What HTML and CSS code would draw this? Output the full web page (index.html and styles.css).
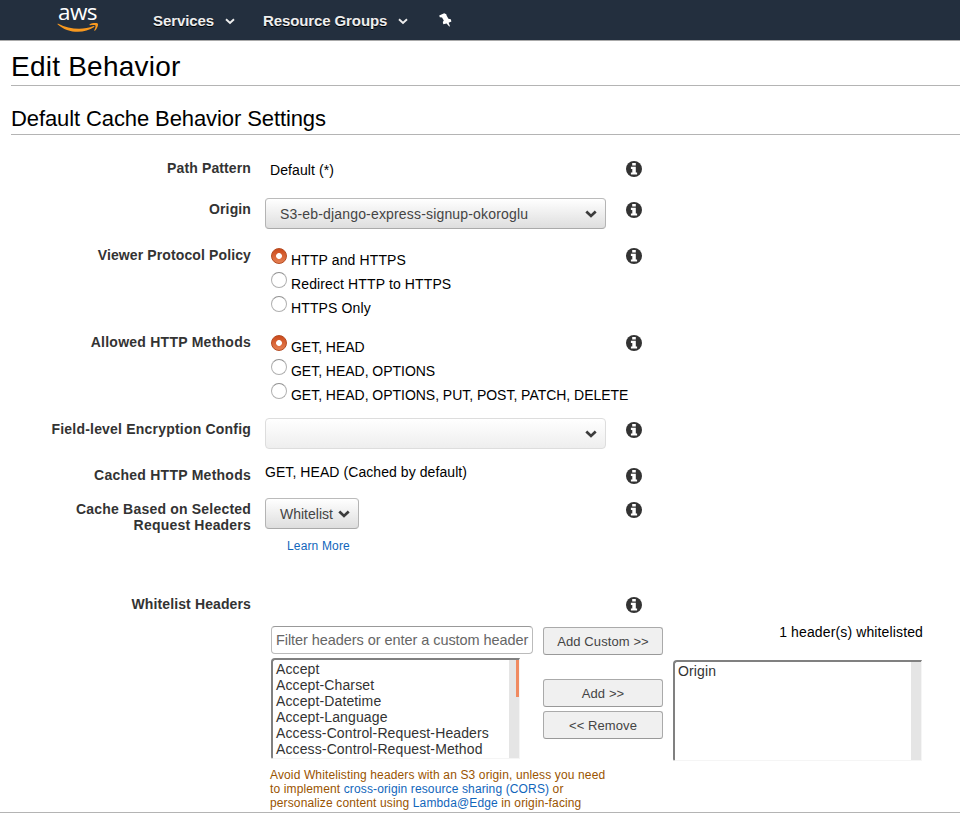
FILE: index.html
```html
<!DOCTYPE html>
<html lang="en">
<head>
<meta charset="utf-8">
<title>Edit Behavior</title>
<link rel="stylesheet" href="styles.css">
</head>
<body>
<svg class="defs" width="0" height="0" aria-hidden="true">
  <symbol id="info" viewBox="0 0 16 16">
    <circle cx="8" cy="8" r="8" fill="#333"/>
    <path fill="#fff" d="M6.200 2h3.600v2.600H6.200zM4.900 5.800h4.900v5.600h1.300v2.100H4.900v-2.100h1.400V7.900H4.900z"/>
  </symbol>
  <symbol id="chevron" viewBox="0 0 12 8">
    <path d="M1.300 1.400 6 5.900l4.700-4.500" fill="none" stroke="currentColor" stroke-width="2.700"/>
  </symbol>
  <symbol id="caret" viewBox="0 0 10 7">
    <path d="M1 1.300 5 5l4-3.700" fill="none" stroke="currentColor" stroke-width="1.900"/>
  </symbol>
</svg>
<header class="topbar">
  <div class="logo">
    <span class="logo-text">aws</span>
    <svg class="smile" width="42" height="10" viewBox="0 0 42 10" fill="#f7981f">
      <path d="M.5 1.200C.3.800.8.400 1.300.8 12 6.300 26 7.500 36.500 3c.8-.3 1.400.5.7 1.100C27 11 10.500 10.500.5 1.200z"/>
      <path d="M32.500 1.500c2-1.500 6.800-1.800 8.200-1 .9.800-.2 5.200-2.700 7.200-.5.300-.9.100-.7-.4.700-1.700 1.600-4 1.100-4.800-.6-.8-3.200-.5-5.300-.3-.7.100-1-.3-.6-.7z"/>
    </svg>
  </div>
  <nav class="nav">
    <a class="nav-item">Services<svg class="nav-caret"><use href="#caret"/></svg></a>
    <a class="nav-item">Resource Groups<svg class="nav-caret"><use href="#caret"/></svg></a>
    <svg class="pin" width="13" height="14" viewBox="0 0 13 14"><path fill="#fff" d="M5.200.3 7.300 1.200 7.600 2.500 9.400 5.700 11.800 6.200 12.400 8.400 9.600 9.800 11 13.300 10.200 13.500 7.600 10.500 4.300 11.200 3.800 9 4.800 7.400 3 4.500.8 4.200.2 2.600z"/></svg>
  </nav>
</header>
<main>
  <h1>Edit Behavior</h1>
  <h2>Default Cache Behavior Settings</h2>
  <div class="form">
    <div class="row path">
      <div class="label">Path Pattern</div>
      <div class="field">Default (*)</div>
      <svg class="info"><use href="#info"/></svg>
    </div>
    <div class="row origin">
      <div class="label">Origin</div>
      <div class="field"><div class="select">S3-eb-django-express-signup-okoroglu<svg><use href="#chevron"/></svg></div></div>
      <svg class="info"><use href="#info"/></svg>
    </div>
    <div class="row radios viewer">
      <div class="label">Viewer Protocol Policy</div>
      <div class="field">
        <div class="option"><i class="radio on"></i>HTTP and HTTPS</div>
        <div class="option"><i class="radio"></i>Redirect HTTP to HTTPS</div>
        <div class="option"><i class="radio"></i>HTTPS Only</div>
      </div>
      <svg class="info"><use href="#info"/></svg>
    </div>
    <div class="row radios methods">
      <div class="label">Allowed HTTP Methods</div>
      <div class="field">
        <div class="option"><i class="radio on"></i>GET, HEAD</div>
        <div class="option"><i class="radio"></i>GET, HEAD, OPTIONS</div>
        <div class="option"><i class="radio"></i>GET, HEAD, OPTIONS, PUT, POST, PATCH, DELETE</div>
      </div>
      <svg class="info"><use href="#info"/></svg>
    </div>
    <div class="row encryption">
      <div class="label">Field-level Encryption Config</div>
      <div class="field"><div class="select disabled"><svg><use href="#chevron"/></svg></div></div>
      <svg class="info"><use href="#info"/></svg>
    </div>
    <div class="row cached">
      <div class="label">Cached HTTP Methods</div>
      <div class="field">GET, HEAD (Cached by default)</div>
      <svg class="info"><use href="#info"/></svg>
    </div>
    <div class="row based">
      <div class="label">Cache Based on Selected<br>Request Headers</div>
      <div class="field"><div class="select small">Whitelist<svg><use href="#chevron"/></svg></div><a class="learn">Learn More</a></div>
      <svg class="info"><use href="#info"/></svg>
    </div>
    <div class="row whitelist">
      <div class="label">Whitelist Headers</div>
      <div class="field"></div>
      <svg class="info"><use href="#info"/></svg>
    </div>
  </div>
  <div class="picker">
    <div class="available">
      <div class="filter">Filter headers or enter a custom header</div>
      <div class="list">
        <div class="items">
          <div>Accept</div><div>Accept-Charset</div><div>Accept-Datetime</div><div>Accept-Language</div><div>Access-Control-Request-Headers</div><div>Access-Control-Request-Method</div>
        </div>
        <div class="track"><div class="thumb"></div></div>
      </div>
    </div>
    <div class="actions">
      <div class="button custom">Add Custom &gt;&gt;</div>
      <div class="button">Add &gt;&gt;</div>
      <div class="button">&lt;&lt; Remove</div>
    </div>
    <div class="chosen">
      <div class="count">1 header(s) whitelisted</div>
      <div class="list"><div class="items"><div>Origin</div></div><div class="track"></div></div>
    </div>
  </div>
  <p class="warning">Avoid Whitelisting headers with an S3 origin, unless you need<br>to implement <a>cross-origin resource sharing (CORS)</a> or<br>personalize content using <a>Lambda@Edge</a> in origin-facing</p>
</main>
</body>
</html>
```
FILE: styles.css
```css
* { box-sizing: border-box; }
body { margin: 0; background: #fff; color: #000; font: 14px/16px "Liberation Sans", Arial, sans-serif; width: 960px; height: 815px; overflow: hidden; }
.defs { display: block; }
svg { display: block; }
.topbar { height: 41px; background: #232f3e; border-bottom: 1px solid #aaa; display: flex; padding-left: 57px; }
.logo { width: 43px; height: 40px; display: flex; flex-direction: column; }
.logo-text { height: 23px; font: 500 22.500px/24px "Open Sans", sans-serif; color: #fff; padding-left: 1px; letter-spacing: -.6px; }
.nav { display: flex; padding: 1px 0 0 53px; height: 41px; align-items: center; }
.nav-item { display: flex; align-items: center; color: #eee; font-size: 15px; font-weight: bold; line-height: 18px; letter-spacing: -.1px; text-shadow: 0 1px 0 #000; margin-right: 28px; }
.nav-caret { width: 10px; height: 7px; margin: 1px 0 0 11px; }
.pin { margin: -2px 0 0 3px; }
h1 { margin: 0 0 0 11px; height: 45px; padding-top: 10px; font-size: 28px; line-height: 32px; letter-spacing: .23px; font-weight: normal; border-bottom: 1px solid #b4b4b4; }
h2 { margin: 0 0 0 11px; height: 49px; padding-top: 20px; font-size: 22px; line-height: 26px; letter-spacing: -.1px; font-weight: normal; border-bottom: 1px solid #b4b4b4; }
.form { padding-top: 22px; }
.row { display: grid; grid-template-columns: 251px 341px 16px; column-gap: 14px; }
.row .info { width: 16px; height: 16px; margin: 4px 0 0 6px; }
.label { text-align: right; font-weight: bold; color: #333; padding-top: 3px; white-space: nowrap; letter-spacing: .2px; }
.path .label, .origin .label, .viewer .label, .whitelist .label { letter-spacing: .12px; }
.methods .label, .cached .label { letter-spacing: .25px; }
.field { white-space: nowrap; letter-spacing: .1px; }
.path { height: 41px; }
.path .field { padding: 5px 0 0 5px; }
.origin, .encryption { height: 46px; }
.radios { height: 87px; }
.radios .field { padding: 4px 0 0 6px; }
.viewer .field { letter-spacing: .12px; }
.methods .field { letter-spacing: -.03px; }
.cached { height: 34px; }
.cached .field { letter-spacing: .07px; }
.based { height: 95px; }
.whitelist { height: 33px; }
.option { display: flex; height: 24px; line-height: 24px; gap: 4px; }
.radio { flex: none; width: 16px; height: 16px; border-radius: 50%; border: 1px solid #b0b0b0; border-top-color: #909090; background: #fff; }
.radio.on { border-color: #b54a20; background: radial-gradient(circle, #fff 0 2.500px, transparent 3.300px), linear-gradient(#cc4a1b, #e58053); }
.select { display: flex; align-items: center; justify-content: space-between; width: 341px; height: 31px; padding: 1px 8px 0 14px; border: 1px solid #aaa; border-color: #bbb #b4b4b4 #aaa; border-radius: 4px; background: linear-gradient(#fff, #dedede); color: #444; letter-spacing: .17px; }
.select svg { width: 12px; height: 8px; margin: 0 0 0 auto; color: #3c3c3c; }
.select.disabled { border-color: #ddd; background: linear-gradient(#fff, #eee); }
.select.small { width: 94px; letter-spacing: 0; }
.learn { display: block; margin: 9px 0 0 22px; font-size: 12px; letter-spacing: .15px; color: #1166bb; }
.picker { display: flex; padding-left: 271px; height: 142px; }
.available { width: 262px; }
.filter { height: 28px; border: 1px solid #bbb; border-top-color: #999; border-radius: 4px; padding: 0 4px; font-size: 14.500px; line-height: 26px; letter-spacing: -.06px; color: #666; white-space: nowrap; }
.list { display: flex; justify-content: space-between; height: 101px; width: 249px; border-top: 2px solid #808080; border-left: 2px solid #808080; border-right: 1px solid #f5f5f5; border-bottom: 1px solid #f5f5f5; border-radius: 4px 0 0 2px; color: #333; letter-spacing: .12px; }
.available .list { margin-top: 4px; }
.items { padding: 1px 0 0 3px; }
.track { width: 10px; background: #e5e5e5; }
.thumb { width: 3px; height: 37px; background: #f08a60; margin-left: 7px; }
.actions { margin-left: 10px; width: 120px; padding-top: 1px; }
.button { height: 28px; border: 1px solid #aaa; border-bottom-color: #999; border-radius: 3px; background: #f0f0f0; color: #444; text-align: center; font-size: 13px; line-height: 27px; letter-spacing: .1px; margin-bottom: 4px; }
.button.custom { margin-bottom: 24px; }
.chosen { margin-left: 10px; width: 250px; }
.count { height: 34px; line-height: 13px; text-align: right; letter-spacing: .13px; }
.warning { margin: 0; padding-left: 270px; height: 45px; font-size: 12px; line-height: 14px; letter-spacing: .13px; color: #9a5400; border-bottom: 1px solid #b4b4b4; white-space: nowrap; }
.warning a { color: #1166bb; }
```
